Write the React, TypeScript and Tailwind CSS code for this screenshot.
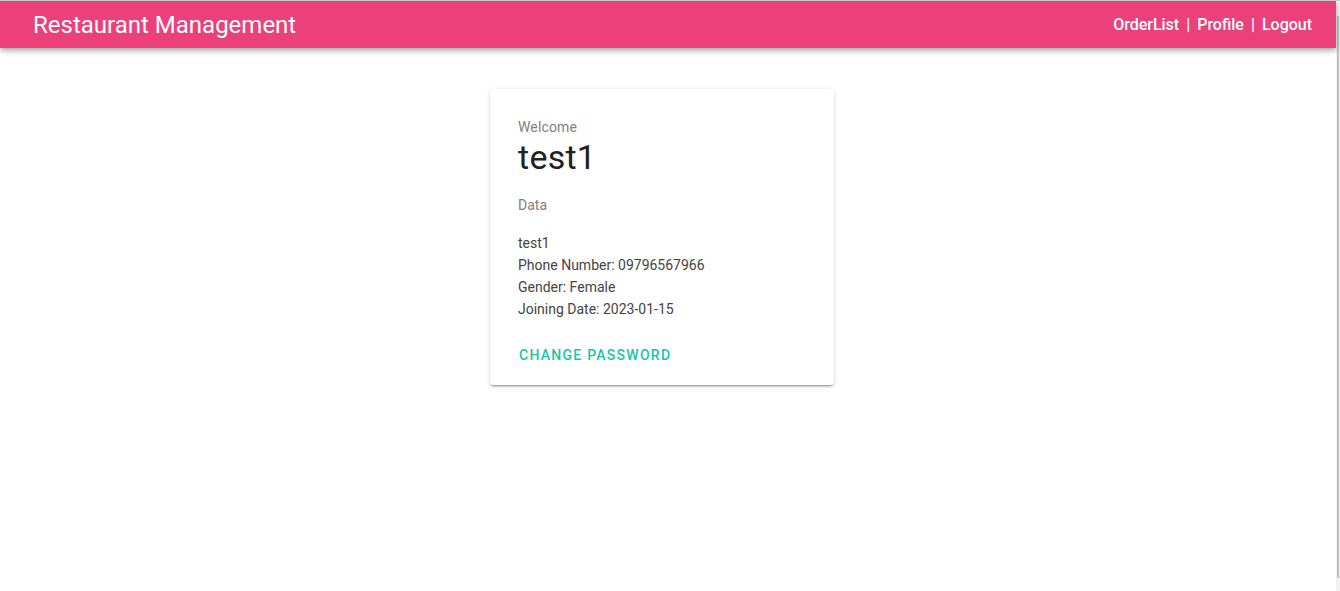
import React from "react";

const details = [
  "test1",
  "Phone Number: 09796567966",
  "Gender: Female",
  "Joining Date: 2023-01-15",
];

const App: React.FC = () => {
  return (
    <div className="w-[1340px] h-[591px] flex bg-white font-['Roboto',sans-serif] overflow-hidden border-t border-[#c8c8c8]">
      <div className="flex-1 flex flex-col">
        {/* Toolbar */}
        <header className="h-[47px] bg-[#ec407a] flex items-center justify-between px-[33px] pr-[24px] shadow-[0_2px_4px_-1px_rgba(0,0,0,0.2),0_4px_5px_0_rgba(0,0,0,0.14),0_1px_10px_0_rgba(0,0,0,0.12)] relative z-10">
          <div className="text-white text-[24px] leading-none">Restaurant Management</div>
          <nav className="flex items-center gap-[7px] text-white text-[16px] font-medium">
            <span>OrderList</span>
            <span>|</span>
            <span>Profile</span>
            <span>|</span>
            <span>Logout</span>
          </nav>
        </header>

        {/* Content */}
        <main className="flex justify-center pt-[41px] pr-[12px]">
          <div className="w-[344px] bg-white rounded-[4px] p-[12px] shadow-[0_3px_1px_-2px_rgba(0,0,0,0.2),0_2px_2px_0_rgba(0,0,0,0.14),0_1px_5px_0_rgba(0,0,0,0.12)]">
            <div className="px-[16px] pt-[16px]">
              <div className="text-[14px] leading-[20px] text-[#808080] tracking-[0.01em]">Welcome</div>
              <div className="text-[34px] leading-[40px] text-[#212121] tracking-[0.0075em]">test1</div>
              <div className="mt-[18px] text-[14px] leading-[20px] text-[#808080]">Data</div>
              <div className="mt-[17px] text-[14px] leading-[22px] text-[#444444]">
                {details.map((d) => (
                  <div key={d}>{d}</div>
                ))}
              </div>
            </div>
            <div className="px-[8px] pt-[17px]">
              <button className="h-[36px] px-[9px] text-[14px] font-medium uppercase tracking-[0.09em] text-[#1bc5a3]">
                Change Password
              </button>
            </div>
          </div>
        </main>
      </div>

      {/* scrollbar strip */}
      <div className="w-[4px] bg-[#f1f1f1] flex flex-col pt-[15px] pb-[13px]">
        <div className="flex-1 w-[2px] ml-[1px] bg-[#c1c1c1]" />
      </div>
    </div>
  );
};

export default App;
